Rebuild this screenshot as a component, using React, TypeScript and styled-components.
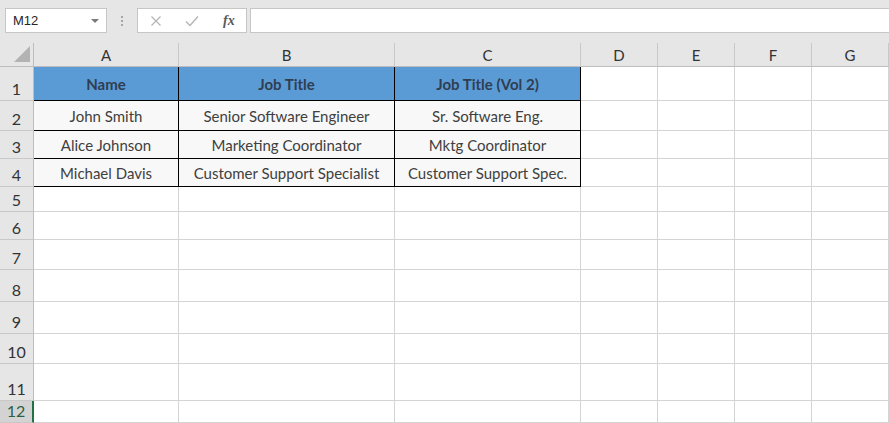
import React from 'react';
import styled, { createGlobalStyle } from 'styled-components';

const GlobalStyle = createGlobalStyle`
  html, body {
    margin: 0;
    padding: 0;
    background: #ffffff;
  }
  body {
    font-family: Lato, 'Open Sans', sans-serif;
  }
`;

const Page = styled.div`
  width: 889px;
  height: 423px;
  overflow: hidden;
  display: flex;
  flex-direction: column;
  background: #ffffff;
`;

const FormulaBar = styled.div`
  height: 43px;
  flex: none;
  box-sizing: border-box;
  display: flex;
  align-items: flex-start;
  padding: 8px 0 0 5px;
  background: #e6e6e6;
`;

const NameBox = styled.div`
  width: 102px;
  height: 25px;
  box-sizing: border-box;
  display: flex;
  align-items: center;
  justify-content: space-between;
  padding: 0 7px 0 7px;
  background: #ffffff;
  border: 1px solid #c6c6c6;
  font-family: 'Liberation Sans', Arial, sans-serif;
  font-size: 13px;
  color: #262626;
`;

const Caret = styled.span`
  width: 0;
  height: 0;
  border-left: 4px solid transparent;
  border-right: 4px solid transparent;
  border-top: 4px solid #7a7a7a;
  margin-top: 1px;
`;

const Grip = styled.div`
  width: 30px;
  height: 25px;
  display: flex;
  flex-direction: column;
  align-items: center;
  justify-content: center;
  gap: 2px;

  span {
    width: 2px;
    height: 2px;
    background: #a6a6a6;
  }
`;

const FxBox = styled.div`
  width: 110px;
  height: 25px;
  box-sizing: border-box;
  display: flex;
  align-items: center;
  padding-left: 12px;
  gap: 23px;
  background: #ffffff;
  border: 1px solid #c6c6c6;
`;

const FxLabel = styled.span`
  font-family: 'Liberation Serif', 'Times New Roman', serif;
  font-style: italic;
  font-weight: 700;
  font-size: 14px;
  color: #595959;
  margin-left: 1px;
`;

const FormulaInput = styled.div`
  flex: 1;
  height: 25px;
  margin-left: 3px;
  margin-right: -1px;
  box-sizing: border-box;
  background: #ffffff;
  border: 1px solid #c6c6c6;
`;

const Sheet = styled.div`
  flex: 1;
  display: grid;
  grid-template-columns: 34px 145px 216px 186px 77px 77px 77px 77px;
  grid-template-rows: 24px 34px 30px 28px 28px 25px 28px 30px 32px 32px 30px 37px 22px;
`;

const Corner = styled.div`
  background: #e6e6e6;
  border-right: 1px solid #bdbdbd;
  border-bottom: 1px solid #bdbdbd;
  box-sizing: border-box;
  display: flex;
  align-items: flex-end;
  justify-content: flex-end;
  padding: 0 3px 4px 0;
`;

const ColHead = styled.div`
  background: #e6e6e6;
  box-sizing: border-box;
  border-right: 1px solid #c8c8c8;
  border-bottom: 1px solid #bdbdbd;
  display: flex;
  align-items: center;
  justify-content: center;
  font-family: Lato, 'Open Sans', sans-serif;
  font-size: 15px;
  color: #333333;
  padding-top: 1px;
`;

const RowHead = styled.div<{ $active?: boolean }>`
  background: ${(p) => (p.$active ? '#d3d3d3' : '#e6e6e6')};
  box-sizing: border-box;
  border-right: ${(p) => (p.$active ? '2px solid #217346' : '1px solid #bdbdbd')};
  border-bottom: 1px solid #c8c8c8;
  display: flex;
  align-items: flex-end;
  justify-content: center;
  padding-bottom: 2px;
  font-family: Lato, 'Open Sans', sans-serif;
  font-size: 16px;
  color: ${(p) => (p.$active ? '#2b5f43' : '#333333')};
`;

type Kind = 'empty' | 'head' | 'data';

const Cell = styled.div<{ $kind: Kind }>`
  box-sizing: border-box;
  display: flex;
  align-items: center;
  justify-content: center;
  white-space: nowrap;
  overflow: hidden;
  font-family: Lato, 'Open Sans', sans-serif;
  font-size: 15px;
  border-right: 1px solid ${(p) => (p.$kind === 'empty' ? '#d4d4d4' : '#000000')};
  border-bottom: 1px solid ${(p) => (p.$kind === 'empty' ? '#d4d4d4' : '#000000')};
  background: ${(p) =>
    p.$kind === 'head' ? '#5b9bd5' : p.$kind === 'data' ? '#f8f8f8' : '#ffffff'};
  color: ${(p) => (p.$kind === 'head' ? '#2f3e52' : '#404040')};
  font-weight: ${(p) => (p.$kind === 'head' ? 700 : 400)};
`;

const columns = ['A', 'B', 'C', 'D', 'E', 'F', 'G'];

const table: string[][] = [
  ['Name', 'Job Title', 'Job Title (Vol 2)'],
  ['John Smith', 'Senior Software Engineer', 'Sr. Software Eng.'],
  ['Alice Johnson', 'Marketing Coordinator', 'Mktg Coordinator'],
  ['Michael Davis', 'Customer Support Specialist', 'Customer Support Spec.'],
];

const CrossIcon = () => (
  <svg width="12" height="12" viewBox="0 0 12 12">
    <path d="M1.5 1.5 L10.5 10.5 M10.5 1.5 L1.5 10.5" stroke="#b4b4b4" strokeWidth="1.2" fill="none" />
  </svg>
);

const CheckIcon = () => (
  <svg width="14" height="12" viewBox="0 0 14 12">
    <path d="M1 6.5 L5 10.5 L13 1.5" stroke="#b4b4b4" strokeWidth="1.4" fill="none" />
  </svg>
);

const CornerMark = () => (
  <svg width="16" height="16" viewBox="0 0 16 16">
    <polygon points="16,0 16,16 0,16" fill="#b3b3b3" />
  </svg>
);

export default function App() {
  return (
    <Page>
      <GlobalStyle />
      <FormulaBar>
        <NameBox>
          M12
          <Caret />
        </NameBox>
        <Grip>
          <span />
          <span />
          <span />
        </Grip>
        <FxBox>
          <CrossIcon />
          <CheckIcon />
          <FxLabel>fx</FxLabel>
        </FxBox>
        <FormulaInput />
      </FormulaBar>

      <Sheet>
        <Corner>
          <CornerMark />
        </Corner>
        {columns.map((c) => (
          <ColHead key={c}>{c}</ColHead>
        ))}

        {Array.from({ length: 12 }, (_, r) => (
          <React.Fragment key={r}>
            <RowHead $active={r === 11}>{r + 1}</RowHead>
            {columns.map((c, ci) => {
              const value = r < table.length && ci < 3 ? table[r][ci] : undefined;
              const kind: Kind = value === undefined ? 'empty' : r === 0 ? 'head' : 'data';
              return (
                <Cell key={c} $kind={kind}>
                  {value}
                </Cell>
              );
            })}
          </React.Fragment>
        ))}
      </Sheet>
    </Page>
  );
}
